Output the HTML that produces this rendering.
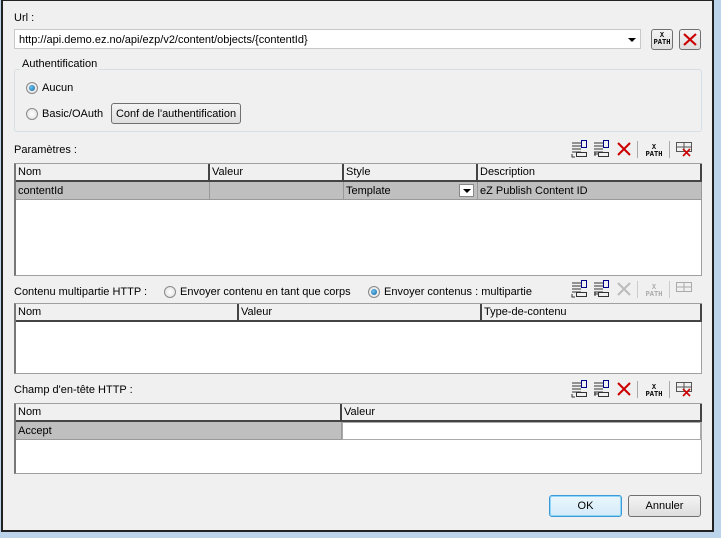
<!DOCTYPE html>
<html><head><meta charset="utf-8"><style>
*{box-sizing:border-box;margin:0;padding:0}
body{width:721px;height:538px;background:#bcd3ec;font-family:"Liberation Sans",Tahoma,sans-serif;font-size:11px;color:#000;position:relative;overflow:hidden}
.win{position:absolute;left:1px;top:0;width:713px;height:532px;background:#f0f0f0;border:2px solid #222;border-top-width:1px}
.a{position:absolute}
.t{position:absolute;white-space:nowrap;line-height:13px}
.inp{background:#fff;border:1px solid #c8c8c8}
.btn{position:absolute;border:1px solid #707070;border-radius:3px;background:linear-gradient(#f4f4f4,#dedede);text-align:center;line-height:20px}
.radio{position:absolute;width:12px;height:12px;border-radius:50%;border:1px solid #8a8a8a;background:radial-gradient(#fff,#ddd)}
.radio.on::after{content:"";position:absolute;left:2px;top:2px;width:6px;height:6px;border-radius:50%;background:radial-gradient(circle at 40% 40%,#6ec6f0,#0a5a9a)}
.tbl{position:absolute;background:#fff;border:1px solid #a0a0a0;border-left:2px solid #777}
.hd{position:absolute;top:0;height:18px;background:#f0f0f0;border-right:2px solid #444;border-bottom:2px solid #444;padding-left:2px;line-height:17px}
.cell{position:absolute;height:18px;background:#bfbfbf;border-right:1px solid #999;border-bottom:1px solid #999;padding-left:2px;line-height:18px}
</style></head><body>
<div class="win"></div>

<div class="t" style="left:14px;top:12px">Url :</div>
<div class="a inp" style="left:14px;top:29px;width:627px;height:20px"></div>
<div class="t" style="left:19px;top:34px">http://api.demo.ez.no/api/ezp/v2/content/objects/{contentId}</div>
<div class="a" style="left:628px;top:38px;width:0;height:0;border-left:4px solid transparent;border-right:4px solid transparent;border-top:4px solid #000"></div>
<div class="btn" style="left:651px;top:29px;width:22px;height:21px;font-family:'Liberation Mono',monospace;font-size:7px;line-height:7px;padding-top:3px;font-weight:bold">X<br>PATH</div>
<div class="btn" style="left:679px;top:29px;width:22px;height:21px"><svg width="20" height="19"><path d="M4 4L16 15M16 4L4 15" stroke="#c00" stroke-width="2.2"/></svg></div>

<div class="a" style="left:14px;top:69px;width:688px;height:63px;border:1px solid #d5dfe5;border-radius:3px"></div>
<div class="t" style="left:20px;top:58px;background:#f0f0f0;padding:0 2px">Authentification</div>
<div class="radio on" style="left:26px;top:82px"></div>
<div class="t" style="left:42px;top:82px">Aucun</div>
<div class="radio" style="left:26px;top:108px"></div>
<div class="t" style="left:42px;top:108px">Basic/OAuth</div>
<div class="btn" style="left:111px;top:103px;width:130px;height:21px">Conf de l'authentification</div>

<div class="t" style="left:14px;top:144px">Paramètres :</div>
<svg class="a" style="left:570px;top:139px" width="125" height="20">
 <g stroke="#333" fill="none"><path d="M2 4h9M2 7h9M2 10h9M2 13h9"/><rect x="11.5" y="1.5" width="5" height="7" stroke="#008"/><rect x="6.5" y="13.5" width="10" height="4"/><path d="M2 15v3h3"/></g>
 <g stroke="#333" fill="none" transform="translate(22,0)"><path d="M2 4h9M2 7h9M2 10h9M2 13h9"/><rect x="11.5" y="1.5" width="5" height="7" stroke="#008"/><rect x="6.5" y="13.5" width="10" height="4"/><path d="M2 15h4M3 13v4"/></g>
 <path d="M48 4l12 12M60 4L48 16" stroke="#c00" stroke-width="2"/>
 <line x1="67.5" y1="2" x2="67.5" y2="19" stroke="#aaa"/>
 <text x="84" y="10" font-size="7" font-family="Liberation Mono" font-weight="bold" text-anchor="middle">X</text>
 <text x="84" y="17" font-size="7" font-family="Liberation Mono" font-weight="bold" text-anchor="middle">PATH</text>
 <line x1="99.5" y1="2" x2="99.5" y2="19" stroke="#aaa"/>
 <g stroke="#555" fill="none"><rect x="106.5" y="3.5" width="15" height="9"/><path d="M106 8h16M114 3v10"/></g>
 <path d="M113 10l7 7M120 10l-7 7" stroke="#c00" stroke-width="1.6"/>
</svg>

<div class="tbl" style="left:14px;top:163px;width:688px;height:113px">
 <div class="hd" style="left:0;width:194px">Nom</div>
 <div class="hd" style="left:194px;width:134px">Valeur</div>
 <div class="hd" style="left:328px;width:134px">Style</div>
 <div class="hd" style="left:462px;width:224px">Description</div>
 <div class="cell" style="left:0;top:18px;width:194px">contentId</div>
 <div class="cell" style="left:194px;top:18px;width:134px"></div>
 <div class="cell" style="left:328px;top:18px;width:134px">Template</div>
 <div class="a" style="left:443px;top:20px;width:15px;height:13px;background:#fff;border:1px solid #888"><div class="a" style="left:3px;top:4px;border-left:4px solid transparent;border-right:4px solid transparent;border-top:4px solid #000"></div></div>
 <div class="cell" style="left:462px;top:18px;width:224px">eZ Publish Content ID</div>
</div>

<div class="t" style="left:14px;top:286px">Contenu multipartie HTTP :</div>
<div class="radio" style="left:164px;top:286px"></div>
<div class="t" style="left:180px;top:286px">Envoyer contenu en tant que corps</div>
<div class="radio on" style="left:368px;top:286px"></div>
<div class="t" style="left:384px;top:286px">Envoyer contenus : multipartie</div>
<svg class="a" style="left:570px;top:279px" width="125" height="20">
 <g stroke="#333" fill="none"><path d="M2 4h9M2 7h9M2 10h9M2 13h9"/><rect x="11.5" y="1.5" width="5" height="7" stroke="#008"/><rect x="6.5" y="13.5" width="10" height="4"/><path d="M2 15v3h3"/></g>
 <g stroke="#333" fill="none" transform="translate(22,0)"><path d="M2 4h9M2 7h9M2 10h9M2 13h9"/><rect x="11.5" y="1.5" width="5" height="7" stroke="#008"/><rect x="6.5" y="13.5" width="10" height="4"/><path d="M2 15h4M3 13v4"/></g>
 <path d="M48 4l12 12M60 4L48 16" stroke="#bbb" stroke-width="2"/>
 <line x1="67.5" y1="2" x2="67.5" y2="19" stroke="#ccc"/>
 <text x="84" y="10" font-size="7" font-family="Liberation Mono" font-weight="bold" text-anchor="middle" fill="#aaa">X</text>
 <text x="84" y="17" font-size="7" font-family="Liberation Mono" font-weight="bold" text-anchor="middle" fill="#aaa">PATH</text>
 <line x1="99.5" y1="2" x2="99.5" y2="19" stroke="#ccc"/>
 <g stroke="#aaa" fill="none"><rect x="106.5" y="3.5" width="15" height="9"/><path d="M106 8h16M114 3v10"/></g>
</svg>

<div class="tbl" style="left:14px;top:303px;width:688px;height:71px">
 <div class="hd" style="left:0;width:223px">Nom</div>
 <div class="hd" style="left:223px;width:243px">Valeur</div>
 <div class="hd" style="left:466px;width:220px">Type-de-contenu</div>
</div>

<div class="t" style="left:14px;top:384px">Champ d'en-tête HTTP :</div>
<svg class="a" style="left:570px;top:379px" width="125" height="20">
 <g stroke="#333" fill="none"><path d="M2 4h9M2 7h9M2 10h9M2 13h9"/><rect x="11.5" y="1.5" width="5" height="7" stroke="#008"/><rect x="6.5" y="13.5" width="10" height="4"/><path d="M2 15v3h3"/></g>
 <g stroke="#333" fill="none" transform="translate(22,0)"><path d="M2 4h9M2 7h9M2 10h9M2 13h9"/><rect x="11.5" y="1.5" width="5" height="7" stroke="#008"/><rect x="6.5" y="13.5" width="10" height="4"/><path d="M2 15h4M3 13v4"/></g>
 <path d="M48 4l12 12M60 4L48 16" stroke="#c00" stroke-width="2"/>
 <line x1="67.5" y1="2" x2="67.5" y2="19" stroke="#aaa"/>
 <text x="84" y="10" font-size="7" font-family="Liberation Mono" font-weight="bold" text-anchor="middle">X</text>
 <text x="84" y="17" font-size="7" font-family="Liberation Mono" font-weight="bold" text-anchor="middle">PATH</text>
 <line x1="99.5" y1="2" x2="99.5" y2="19" stroke="#aaa"/>
 <g stroke="#555" fill="none"><rect x="106.5" y="3.5" width="15" height="9"/><path d="M106 8h16M114 3v10"/></g>
 <path d="M113 10l7 7M120 10l-7 7" stroke="#c00" stroke-width="1.6"/>
</svg>

<div class="tbl" style="left:14px;top:403px;width:688px;height:71px">
 <div class="hd" style="left:0;width:326px">Nom</div>
 <div class="hd" style="left:326px;width:360px">Valeur</div>
 <div class="cell" style="left:0;top:18px;width:326px">Accept</div>
 <div class="a" style="left:326px;top:18px;width:360px;height:18px;background:#fff;border:1px solid #aaa;border-right:2px solid #aaa"></div>
</div>

<div class="btn" style="left:549px;top:495px;width:73px;height:22px;border-color:#3c9ad8;box-shadow:inset 0 0 0 1px #8fd6f8;background:linear-gradient(#eaf6fd,#d3ebf8)">OK</div>
<div class="btn" style="left:628px;top:495px;width:73px;height:22px">Annuler</div>
</body></html>
